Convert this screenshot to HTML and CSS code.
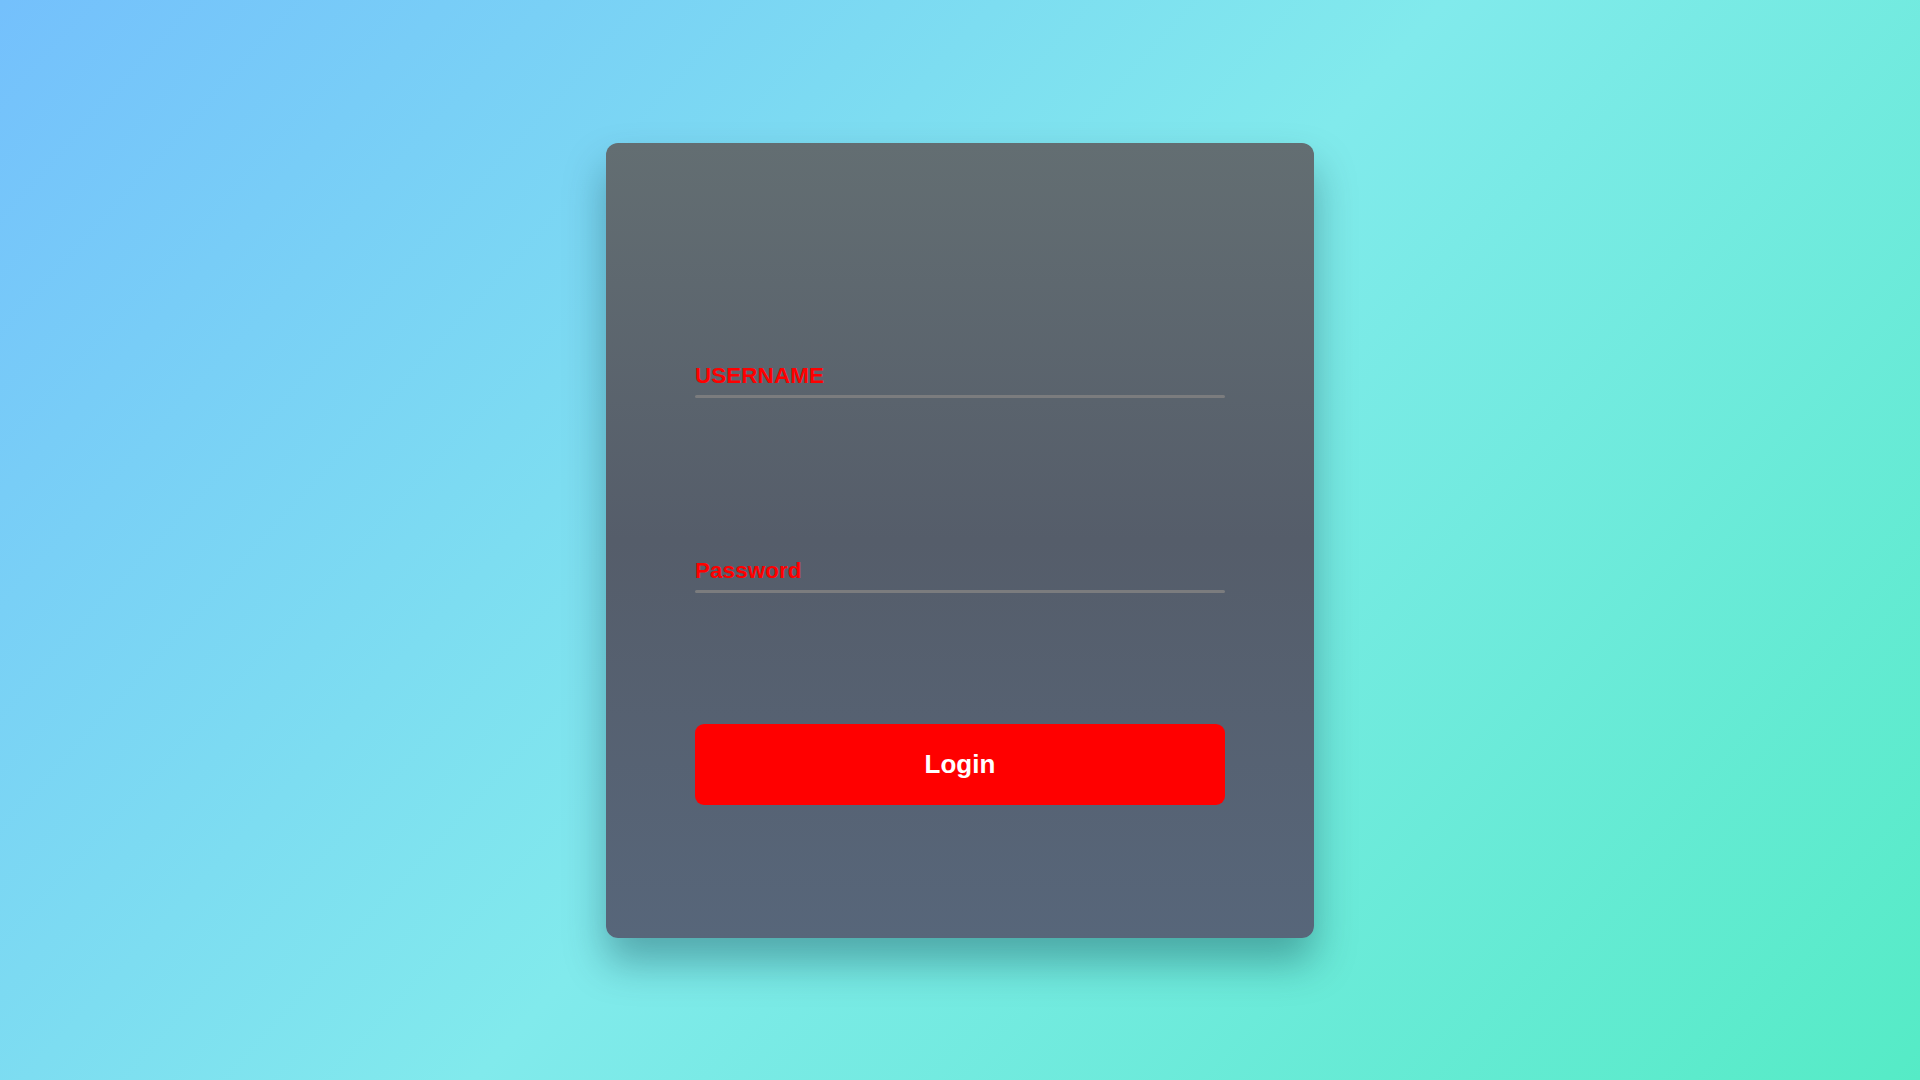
FILE: index.html
```html
<!DOCTYPE html>
<html lang="en">
<head>
<meta charset="utf-8">
<title>Login</title>
<link rel="stylesheet" href="styles.css">
</head>
<body>
<main class="page">
  <form class="card">
    <div class="field">
      <label class="field-label">USERNAME</label>
      <div class="field-line"></div>
    </div>
    <div class="field field-second">
      <label class="field-label">Password</label>
      <div class="field-line"></div>
    </div>
    <button type="button" class="login-btn">Login</button>
  </form>
</main>
</body>
</html>
```

FILE: styles.css
```css
* { box-sizing: border-box; }
html, body {
  margin: 0;
  padding: 0;
  width: 100%;
  height: 100%;
}
body {
  font-family: "Liberation Sans", Arial, sans-serif;
  background: linear-gradient(132deg, #74c0fc 0%, #81eaec 50%, #55ebc6 100%);
}
.page {
  width: 1920px;
  height: 1080px;
  display: flex;
  align-items: center;
  justify-content: center;
}
.card {
  width: 708px;
  height: 795px;
  border-radius: 12px;
  background: linear-gradient(to bottom, #636e72 0%, #555d6a 50%, #57667a 100%);
  box-shadow: 0 24px 40px rgba(10, 60, 70, 0.38);
  padding: 220px 89px 133px;
  display: flex;
  flex-direction: column;
}
.field {
  display: flex;
  flex-direction: column;
}
.field-second {
  margin-top: 160px;
}
.field-label {
  font-size: 22.4px;
  line-height: 25px;
  font-weight: bold;
  color: #ff0000;
  letter-spacing: 0.1px;
}
.field-line {
  margin-top: 7px;
  height: 3px;
  border-radius: 2px;
  background: #7b7c7e;
}
.login-btn {
  margin-top: 131px;
  height: 81px;
  width: 100%;
  border: none;
  border-radius: 9px;
  background: #ff0000;
  color: #ffffff;
  font-family: "Liberation Sans", Arial, sans-serif;
  font-size: 26px;
  font-weight: bold;
  padding: 0;
  cursor: pointer;
}
```
